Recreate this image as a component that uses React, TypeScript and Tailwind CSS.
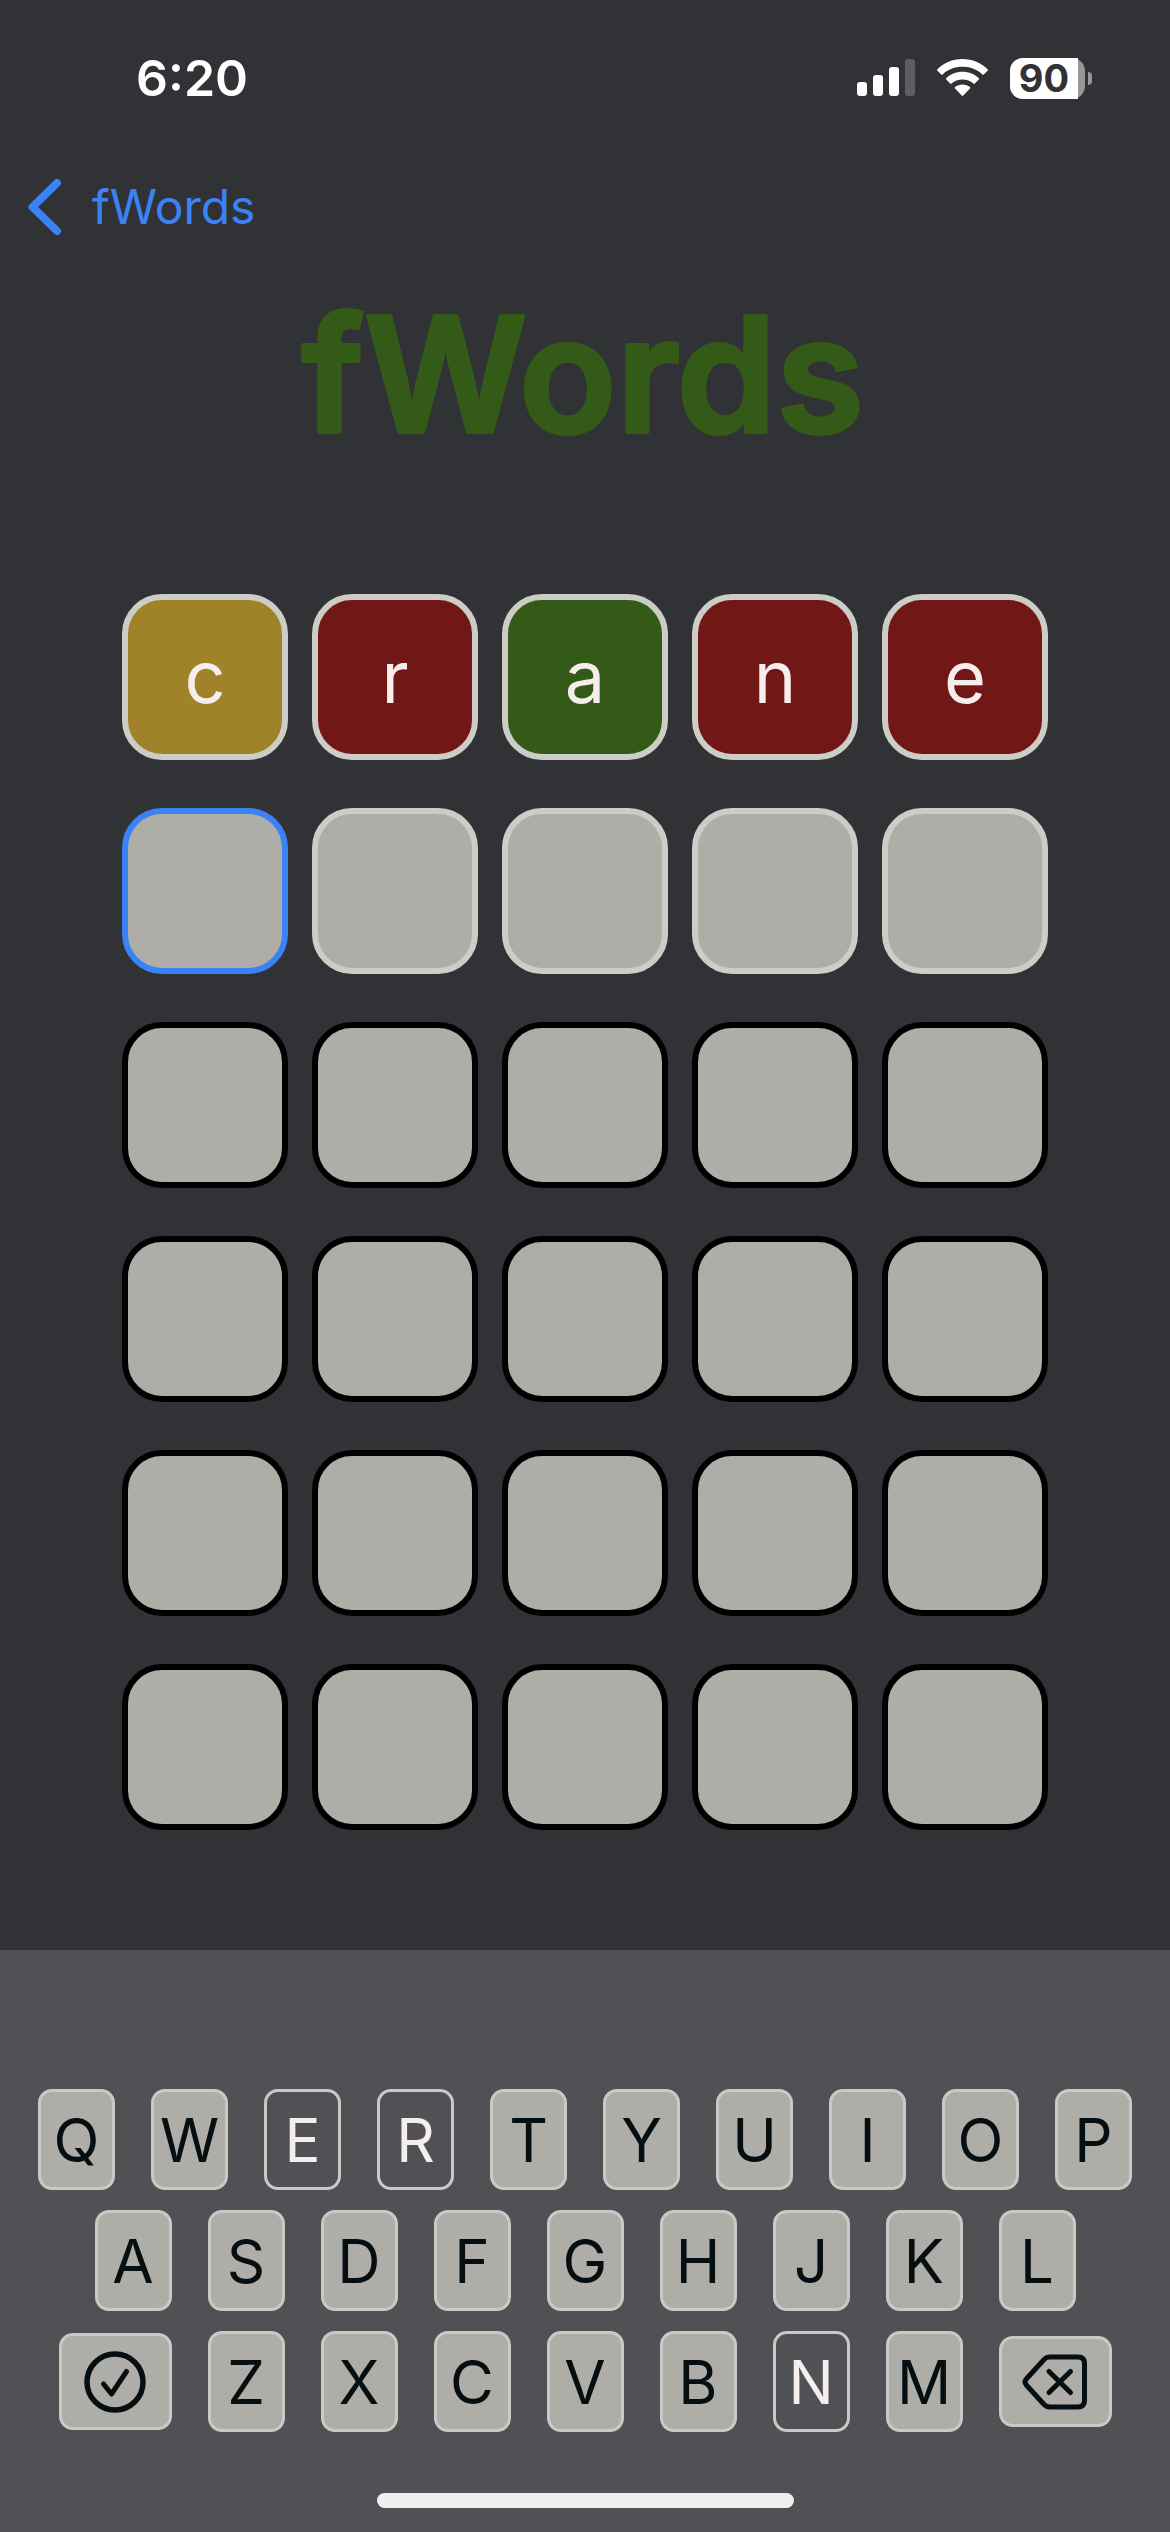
type TileState = "present" | "absent" | "correct" | "focused" | "open" | "locked";

const tileStyles: Record<TileState, string> = {
  present: "border-[#cdcdc8] bg-[#a08228]",
  absent: "border-[#cdcdc8] bg-[#711817]",
  correct: "border-[#cdcdc8] bg-[#335b17]",
  focused: "border-[#3b82f6] bg-[#aeada8]",
  open: "border-[#cdcdc8] bg-[#aeada8]",
  locked: "border-black bg-[#aeada8]",
};

const guess: { letter: string; state: TileState }[] = [
  { letter: "c", state: "present" },
  { letter: "r", state: "absent" },
  { letter: "a", state: "correct" },
  { letter: "n", state: "absent" },
  { letter: "e", state: "absent" },
];

const currentRow: TileState[] = ["focused", "open", "open", "open", "open"];
const lockedRows = [2, 3, 4, 5];
const usedLetters = ["E", "R", "N"];

function Tile({ state, letter }: { state: TileState; letter?: string }) {
  return (
    <div
      className={`flex aspect-square items-center justify-center rounded-[40px] border-6 text-[72px] leading-none text-[#f6eeec] ${tileStyles[state]}`}
    >
      {letter}
    </div>
  );
}

function Key({ letter }: { letter: string }) {
  const used = usedLetters.includes(letter);
  return (
    <button
      type="button"
      className={`flex h-[101px] w-[77px] items-center justify-center rounded-[14px] border-3 border-[#c9c9c5] text-[60px] leading-none ${
        used ? "text-[#f6eeec]" : "bg-[#aeada8] text-[#050e11]"
      }`}
    >
      {letter}
    </button>
  );
}

function StatusBar() {
  return (
    <div className="flex h-[156px] items-center justify-between pr-[78px] pl-[136px] text-white">
      <span className="text-[50px] leading-none font-semibold">6:20</span>
      <div className="flex items-center">
        <svg width="58" height="38" viewBox="0 0 58 38" fill="currentColor" aria-label="Signal">
          <rect x="0" y="23" width="10" height="14" rx="3" />
          <rect x="16" y="16" width="10" height="21" rx="3" />
          <rect x="32" y="8" width="10" height="29" rx="3" />
          <rect x="48" y="0" width="10" height="37" rx="3" fill="#5d5e62" />
        </svg>
        <svg
          className="ml-[22px]"
          width="51"
          height="38"
          viewBox="0 0 51 38"
          fill="currentColor"
          aria-label="Wi-Fi"
        >
          <path d="M25.500 0C35.500 0 44.300 3.800 50.600 10.200Q51.300 11 50.600 11.700L46.800 15.500Q46.100 16.200 45.300 15.400C40 10.400 33.200 7.800 25.500 7.800S11 10.400 5.700 15.400Q4.900 16.200 4.200 15.500L.4 11.700Q-.3 11 .4 10.200C6.700 3.800 15.500 0 25.500 0Z" />
          <path d="M25.500 12.800C32 12.800 37.600 15.200 41.800 19.200Q42.500 19.900 41.800 20.600L37.800 24.600Q37.100 25.200 36.400 24.600C33.400 22 29.800 20.500 25.500 20.500S17.600 22 14.600 24.600Q13.900 25.200 13.200 24.600L9.200 20.600Q8.500 19.900 9.200 19.200C13.400 15.200 19 12.800 25.500 12.800Z" />
          <path d="M25.500 25.500C28.300 25.500 31 26.400 33 28Q33.700 28.700 33 29.400L26.300 36.500Q25.500 37.300 24.700 36.500L18 29.400Q17.300 28.700 18 28C20 26.400 22.700 25.500 25.500 25.500Z" />
        </svg>
        <div className="ml-[22px] flex h-[41px] w-[75px] items-center rounded-[13px] bg-[#98989b]">
          <span className="flex h-full w-[68px] items-center justify-center rounded-l-[13px] bg-white text-[38px] leading-none font-bold text-[#313236]">
            90
          </span>
        </div>
        <div className="ml-[3px] h-[13px] w-1 rounded-r-full bg-[#98989b]" />
      </div>
    </div>
  );
}

export default function App() {
  return (
    <main className="flex min-h-screen flex-col bg-[#313236] font-['Inter',sans-serif]">
      <StatusBar />

      <nav className="flex h-[102px] items-center px-7">
        <a href="#back" className="flex items-center gap-[30px] text-[48px] leading-none text-[#3b82f6]">
          <svg width="34" height="58" viewBox="0 0 34 58" fill="none" aria-hidden="true">
            <path d="M29 5L4.500 29L29 53" stroke="currentColor" strokeWidth="8" strokeLinecap="round" strokeLinejoin="round" />
          </svg>
          fWords
        </a>
      </nav>

      <h1 className="flex h-[232px] items-center justify-center">
        <svg width="640" height="220" viewBox="0 0 640 220" role="img" aria-label="fWords">
          <text
            x="318"
            y="168"
            textAnchor="middle"
            fontSize="160"
            fontWeight="600"
            fill="#335b17"
            stroke="#335b17"
            strokeWidth="4"
            strokeLinejoin="round"
          >
            fWords
          </text>
        </svg>
      </h1>

      <section aria-label="Guesses" className="mt-[104px] grid grid-cols-5 gap-x-6 gap-y-12 px-[122px]">
        {guess.map((tile) => (
          <Tile key={tile.letter} state={tile.state} letter={tile.letter} />
        ))}
        {currentRow.map((state, column) => (
          <Tile key={column} state={state} />
        ))}
        {lockedRows.map((row) =>
          currentRow.map((_, column) => <Tile key={`${row}-${column}`} state="locked" />),
        )}
      </section>

      <div className="min-h-[120px] flex-1" />

      <section aria-label="Keyboard" className="flex flex-col items-center bg-[#505155] pt-[139px] pb-6">
        <div className="flex flex-col items-center gap-5">
          <div className="flex gap-9">
            {[..."QWERTYUIOP"].map((letter) => (
              <Key key={letter} letter={letter} />
            ))}
          </div>
          <div className="flex gap-9">
            {[..."ASDFGHJKL"].map((letter) => (
              <Key key={letter} letter={letter} />
            ))}
          </div>
          <div className="flex items-center gap-9">
            <button
              type="button"
              aria-label="Submit guess"
              className="flex h-[97px] w-[113px] items-center justify-center rounded-[14px] border-3 border-[#c9c9c5] bg-[#aeada8] text-[#050e11]"
            >
              <svg width="62" height="62" viewBox="0 0 62 62" fill="none" stroke="currentColor" strokeLinecap="round" strokeLinejoin="round">
                <circle cx="31" cy="31" r="28" strokeWidth="5.500" />
                <path d="M19.500 33L27.500 43L42.500 20.500" strokeWidth="5" />
              </svg>
            </button>
            {[..."ZXCVBNM"].map((letter) => (
              <Key key={letter} letter={letter} />
            ))}
            <button
              type="button"
              aria-label="Delete letter"
              className="flex h-[91px] w-[113px] items-center justify-center rounded-[14px] border-3 border-[#c9c9c5] bg-[#aeada8] text-[#050e11]"
            >
              <svg width="66" height="56" viewBox="0 0 66 56" fill="none" stroke="currentColor" strokeWidth="5" strokeLinecap="round" strokeLinejoin="round">
                <path d="M27.500 3H56Q62.500 3 62.500 9.500V46.500Q62.500 53 56 53H27.500Q24.500 53 22.300 50.800L4.300 31Q1.800 28 4.300 25L22.300 5.200Q24.500 3 27.500 3Z" />
                <path d="M27 17.500L48.500 38.500M48.500 17.500L27 38.500" />
              </svg>
            </button>
          </div>
        </div>
        <div className="mt-[61px] h-[15px] w-[417px] rounded-full bg-[#efefef]" />
      </section>
    </main>
  );
}
